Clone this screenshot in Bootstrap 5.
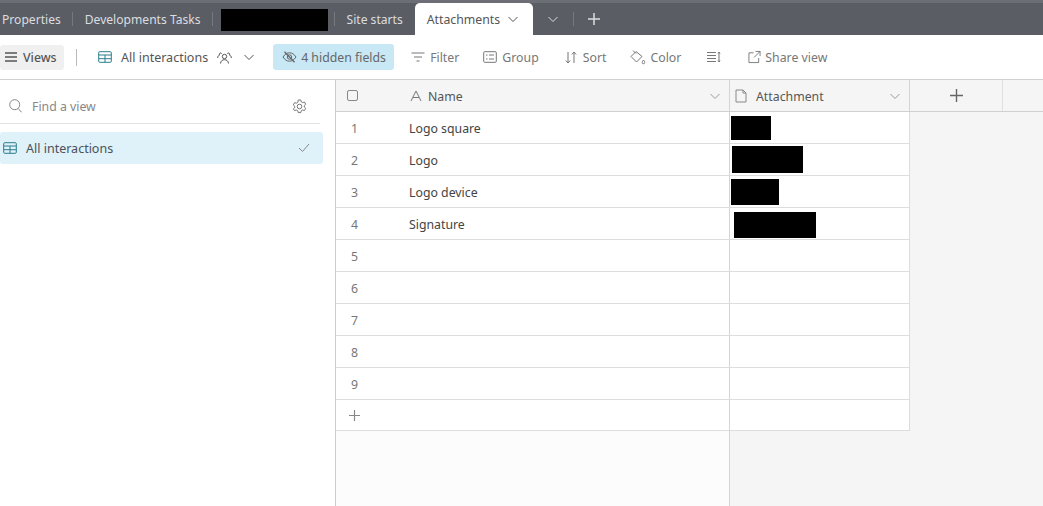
<!doctype html>
<html lang="en"><head><meta charset="utf-8"><title>Attachments</title>
<link href="https://cdn.jsdelivr.net/npm/bootstrap@5.3.0/dist/css/bootstrap.min.css" rel="stylesheet">
<style>
html,body{height:506px;overflow:hidden}
body{font-family:"Noto Sans","Open Sans",sans-serif;font-size:12.3px;color:#444;background:#fff}
svg{fill:none;stroke:currentColor;stroke-width:1;flex:none;display:block}
.tabbar{height:35px;background:#5a5d64;border-top:3px solid #6b6e74;color:#dcdde0;padding-left:2px;font-size:12.1px}
.tabbar span{padding-top:2px}
.tabsep{width:1px;height:14px;background:#75787e}
.sep1{margin:0 12px 0 11px}.sep2{margin:0 8px 0 11px}.sep3{margin:0 12px 0 6px}.sep4{margin:0 13px 0 0}
.hide-tab{width:107px;height:22px;background:#000;margin-top:2px}
.tab-active{width:118px;height:32px;margin-left:12px;background:#fff;color:#555;border-radius:5px 5px 0 0;padding-left:12px;gap:7px;font-size:12.3px}
.ml-more{margin-left:14px;margin-right:14px}
.toolbar{height:45px;border-bottom:1px solid #d0d0d0;color:#777}
.toolbar span{padding-top:2px}
.tbtn{display:flex;align-items:center;gap:5px;white-space:nowrap}
.views{width:64px;height:25px;background:#f0f0f0;border-radius:3px;color:#555;gap:5px;padding-left:4px;font-weight:500}
.tsep{width:1px;height:17px;background:#bbb;margin:0 21px 0 12px}
.tb-name{color:#555;gap:9px;font-size:12.5px}.tb-name .tblc{color:#2a7f8c}
.tb-chev{margin-left:2px}
.hidden-btn{width:121px;height:26px;background:#c8e8f5;border-radius:3px;color:#666;padding-left:9px;margin:0 17px 0 18px;gap:4px}
.tgap{margin-left:25px}
.tgap-s{margin-left:24px}
.tgap-l{margin-left:26px}
.tgap-x{margin-left:27px}
.share-g{gap:4px}
.sort-g{gap:6px}
.color-g{gap:4px}
.main-area{height:426px}
.side{width:336px;border-right:1px solid #ccc;flex:none}
.search-row{height:44px;width:320px;border-bottom:1px solid #e3e3e3;padding:9px 0 0 9px;color:#888;gap:10px}
.search-row span{padding-top:2px}
.gear{margin-right:13px;color:#777}
.view-row{width:323px;height:32px;margin-top:8px;background:#dff1f9;border-radius:3px;padding-left:3px;gap:9px;color:#4a525b;font-size:12.5px}
.view-row span{padding-top:3px}
.view-row .tblc{color:#2a7f8c}
.vcheck{margin-right:13px;color:#888}
.grid-wrap{min-width:0;background:#f5f5f5}
.ghead{height:32px;background:#f5f5f5;border-bottom:1px solid #d0d0d0;color:#555}
.ghead span{padding-top:4px}
.cname{width:393px;flex:none}
.cattach{width:181px;flex:none;border-left:1px solid #d4d4d4}
.ghead .cattach{width:180px}
.gh-check{width:73px;padding-left:11px;color:#888}
.a-icon{margin-right:5px;color:#777}
.file-icon{margin-right:8px;color:#888}
.chev-m{margin-right:8px;color:#999}
.addcol{width:94px;border-right:1px solid #e0e0e0;border-left:1px solid #d4d4d4;color:#666}
.grow{height:32px;background:#fff;border-bottom:1px solid #ddd;width:574px;color:#444}
.grow .cname,.grow .cattach{height:31px}
.grow .cattach{border-right:1px solid #ddd}
.grow .cname span{padding-top:3px}
.rnum{width:73px;padding-left:15px;color:#777;flex:none}
.addrow{height:31px}
.gfill{background:#f5f5f5}
.gfill .cname{background:#fcfcfc}
.gfill .cattach{border-right:0}
.blk{background:#000}
.b1{width:40px;height:24px;margin-left:1px}
.b2{width:71px;height:27px;margin-left:2px}
.b3{width:48px;height:26px;margin:1px 0 0 1px}
.b4{width:82px;height:26px;margin:2px 0 0 4px}
.gr-add{padding-left:12px;color:#888}
</style></head><body>
<svg width="0" height="0" class="position-absolute"><defs>
<symbol id="chev" viewBox="0 0 12 12"><path d="M1.500 4l4.500 4.500L10.500 4"/></symbol>
<symbol id="tbl" viewBox="0 0 14 12"><rect x=".7" y=".7" width="12.6" height="10.6" rx="1"/><path d="M.7 4h12.600M.7 7.700h12.600M7 4v7.300"/></symbol>
</defs></svg>

<div class="tabbar d-flex align-items-center">
<span>Properties</span><i class="tabsep sep1"></i><span>Developments Tasks</span><i class="tabsep sep2"></i><div class="hide-tab"></div><i class="tabsep sep3"></i><span>Site starts</span>
<div class="tab-active d-flex align-items-center align-self-end"><span>Attachments</span><svg width="12" height="12"><use href="#chev"/></svg></div>
<svg class="ml-more" width="12" height="12"><use href="#chev"/></svg><i class="tabsep sep4"></i>
<svg width="14" height="14" viewBox="0 0 14 14"><path d="M7 1v12M1 7h12" stroke-width="1.500"/></svg>
</div>

<div class="toolbar d-flex align-items-center">
<div class="tbtn views"><svg width="14" height="12" viewBox="0 0 14 12"><path d="M1 2h12M1 6h12M1 10h12" stroke-width="1.400"/></svg><span>Views</span></div>
<i class="tsep"></i>
<div class="tbtn tb-name"><svg class="tblc" width="14" height="12"><use href="#tbl"/></svg><span>All interactions</span>
<svg width="15" height="13" viewBox="0 0 15 13"><circle cx="7.500" cy="5.500" r="2.200"/><path d="M3.500 12.500c.4-2.800 2-3.800 4-3.800s3.600 1 4 3.800M.7 7c0-1.700.6-2.500 1.800-2.900a1.300 1.300 0 1 1 2.200-1.500M10.300 2.600a1.300 1.300 0 1 1 2.200 1.500c1.200.4 1.800 1.200 1.800 2.900"/></svg>
<svg class="tb-chev" width="12" height="12"><use href="#chev"/></svg></div>
<div class="tbtn hidden-btn"><svg width="15" height="12" viewBox="0 0 15 12"><path d="M1 6c2-3 4-4.200 6.500-4.200S12 3 14 6c-2 3-4 4.200-6.500 4.200S3 9 1 6z"/><circle cx="7.500" cy="6" r="2.200"/><path d="M2.500 .7l10 10.600" stroke-width="1.300"/></svg><span>4 hidden fields</span></div>
<div class="tbtn"><svg width="14" height="10" viewBox="0 0 14 10"><path d="M.5 1h13M3 5h8M5.500 9h3" stroke-width="1.200"/></svg><span>Filter</span></div>
<div class="tbtn tgap-s"><svg width="14" height="12" viewBox="0 0 14 12"><rect x=".7" y=".7" width="12.600" height="10.600" rx="1"/><path d="M3 4h1.500M6 4h5M3 8h1.500M6 8h5"/></svg><span>Group</span></div>
<div class="tbtn tgap-l sort-g"><svg width="12" height="13" viewBox="0 0 12 13"><path d="M3 1v11M.8 9.500L3 12l2.200-2.500M9 12V1M6.800 3.500L9 1l2.200 2.500"/></svg><span>Sort</span></div>
<div class="tbtn tgap-s color-g"><svg width="16" height="15" viewBox="0 0 16 15"><path d="M6 1.500L1 6.500l5.500 5.500 5.500-5.500zM3 .5l3 3M13.500 10c-1 1.300-1.300 2-1.300 2.500a1.200 1.200 0 0 0 2.500 0c0-.5-.3-1.200-1.200-2.500z"/></svg><span>Color</span></div>
<div class="tbtn tgap"><svg width="15" height="12" viewBox="0 0 15 12"><path d="M1 1.500h9M1 4.500h9M1 7.500h9M1 10.500h9M13 1v10M12 2.500L13 1l1 1.500M12 9.500l1 1.500 1-1.500"/></svg></div>
<div class="tbtn tgap-x share-g"><svg width="13" height="14" viewBox="0 0 14 14"><path d="M6 2.500H1v10.500h10.500V8M8 1h5v5M13 1L6.500 7.500"/></svg><span>Share view</span></div>
</div>

<div class="main-area d-flex">
<aside class="side">
<div class="search-row d-flex align-items-center"><svg width="13" height="14" viewBox="0 0 13 14"><circle cx="5.700" cy="5.700" r="5"/><path d="M9.300 9.500l3.200 3.800"/></svg><span class="flex-grow-1">Find a view</span>
<svg class="gear" width="15" height="15" viewBox="0 0 15 15"><circle cx="7.500" cy="7.500" r="2.300"/><path d="M6.200 1h2.600l.4 1.800 1.400.8 1.800-.6 1.300 2.300-1.400 1.200v1.600l1.400 1.200-1.300 2.300-1.800-.6-1.400.8-.4 1.800H6.200l-.4-1.800-1.400-.8-1.800.6L1.300 9.900l1.400-1.200V7.100L1.300 5.900l1.300-2.300 1.800.6 1.400-.8z"/></svg></div>
<div class="view-row d-flex align-items-center"><svg class="tblc" width="14" height="12"><use href="#tbl"/></svg><span class="flex-grow-1">All interactions</span><svg class="vcheck" width="12" height="10" viewBox="0 0 12 10"><path d="M1 5l3.500 3.500L11 1"/></svg></div>
</aside>

<section class="grid-wrap flex-grow-1 d-flex flex-column">
<div class="ghead d-flex">
<div class="cname d-flex align-items-center"><div class="gh-check"><svg width="11" height="11" viewBox="0 0 11 11"><rect x=".5" y=".5" width="10" height="10" rx="1.500"/></svg></div><svg class="a-icon" width="14" height="12" viewBox="0 0 14 12"><path d="M2 11L7 1l5 10M4 7.500h6"/></svg><span class="flex-grow-1">Name</span><svg class="chev-m" width="12" height="12"><use href="#chev"/></svg></div>
<div class="cattach d-flex align-items-center ps-1"><svg class="file-icon" width="14" height="14" viewBox="0 0 14 14"><path d="M2 1h7l3 3v9H2zM9 1v3h3"/></svg><span class="flex-grow-1">Attachment</span><svg class="chev-m" width="12" height="12"><use href="#chev"/></svg></div>
<div class="addcol d-flex align-items-center justify-content-center"><svg width="13" height="13" viewBox="0 0 13 13"><path d="M6.500 0v13M0 6.500h13" stroke-width="1.400"/></svg></div>
</div>
<div class="grow d-flex"><div class="cname d-flex align-items-center"><span class="rnum">1</span><span>Logo square</span></div><div class="cattach d-flex align-items-center"><div class="blk b1"></div></div></div>
<div class="grow d-flex"><div class="cname d-flex align-items-center"><span class="rnum">2</span><span>Logo</span></div><div class="cattach d-flex align-items-center"><div class="blk b2"></div></div></div>
<div class="grow d-flex"><div class="cname d-flex align-items-center"><span class="rnum">3</span><span>Logo device</span></div><div class="cattach d-flex align-items-center"><div class="blk b3"></div></div></div>
<div class="grow d-flex"><div class="cname d-flex align-items-center"><span class="rnum">4</span><span>Signature</span></div><div class="cattach d-flex align-items-center"><div class="blk b4"></div></div></div>
<div class="grow d-flex"><div class="cname d-flex align-items-center"><span class="rnum">5</span></div><div class="cattach"></div></div>
<div class="grow d-flex"><div class="cname d-flex align-items-center"><span class="rnum">6</span></div><div class="cattach"></div></div>
<div class="grow d-flex"><div class="cname d-flex align-items-center"><span class="rnum">7</span></div><div class="cattach"></div></div>
<div class="grow d-flex"><div class="cname d-flex align-items-center"><span class="rnum">8</span></div><div class="cattach"></div></div>
<div class="grow d-flex"><div class="cname d-flex align-items-center"><span class="rnum">9</span></div><div class="cattach"></div></div>
<div class="grow addrow d-flex"><div class="cname d-flex align-items-center gr-add"><svg width="13" height="13" viewBox="0 0 13 13"><path d="M6.500 1v11M1 6.500h11" stroke-width="1.200"/></svg></div><div class="cattach"></div></div>
<div class="gfill flex-grow-1 d-flex"><div class="cname"></div><div class="cattach"></div></div>
</section>
</div>
</body></html>
